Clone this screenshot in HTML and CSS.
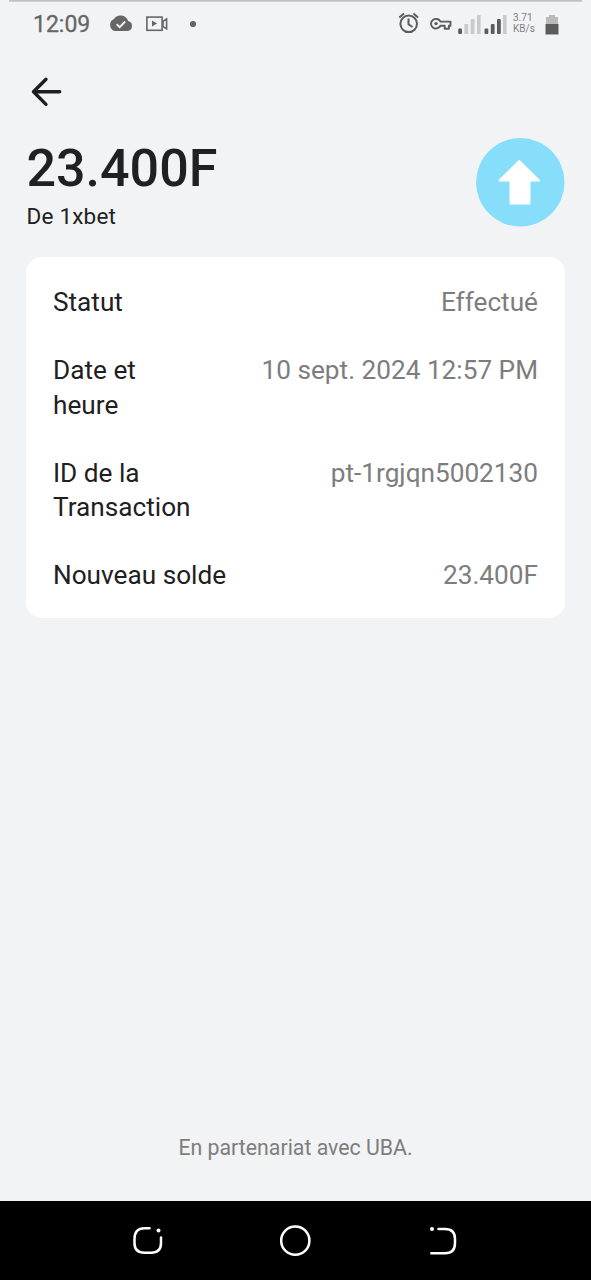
FILE: index.html
```html
<!DOCTYPE html>
<html lang="fr">
<head>
<meta charset="utf-8">
<title>Transaction</title>
<link rel="stylesheet" href="styles.css">
</head>
<body>
<div class="screen">
  <div class="top-line"></div>
  <header class="status">
    <span class="clock">12:09</span>
    <svg class="notif" width="90" height="24" viewBox="0 0 90 24">
      <path fill="#666" d="M6.100 19A6.200 6.200 0 0 1 4.700 7.300A8 8 0 0 1 19.100 9A5.100 5.100 0 0 1 18.700 19Z"/>
      <path fill="none" stroke="#f2f3f5" stroke-width="1.900" d="M7.700 12.200l3 2.900 5.500-5.600"/>
      <g fill="none" stroke="#666" stroke-width="1.600">
        <rect x="37.900" y="5.100" width="15.200" height="13.200"/>
        <path d="M54 9.200l3.600-2.200v9.800l-3.600-2.200z"/>
      </g>
      <path fill="#666" d="M43 8.600v6l5-3z"/>
      <circle cx="84" cy="12" r="3.100" fill="#666"/>
    </svg>
    <svg class="signals" width="112" height="30" viewBox="397 8 112 30">
      <g fill="none" stroke="#5c5c5c" stroke-width="2">
        <circle cx="408.700" cy="23.800" r="8.300"/>
        <path d="M408.500 18.500v5.800l4 2.700M399.300 17.400l4.700-3.900M413.400 13.500l4.700 3.900"/>
      </g>
      <path fill="none" stroke="#5c5c5c" stroke-width="1.900" stroke-linejoin="round" d="M440.500 21.600h10v4.200h-1.600v3h-4.200v-3h-4.200A5 4.800 0 1 1 440.500 21.600Z"/>
      <circle cx="436" cy="23.600" r="1.700" fill="#5c5c5c"/>
      <g fill="#c9cacb">
        <rect x="464.400" y="24" width="3.800" height="10"/>
        <rect x="470.700" y="19" width="3.800" height="15"/>
        <rect x="477" y="15" width="3.600" height="19"/>
        <rect x="503" y="15" width="3.600" height="19"/>
      </g>
      <g fill="#5c5c5c">
        <rect x="458.200" y="28.500" width="3.800" height="5.500" rx="1"/>
        <rect x="484.500" y="28.500" width="3.800" height="5.500" rx="1"/>
        <rect x="490.800" y="24" width="3.800" height="10" rx="1"/>
        <rect x="497" y="19" width="3.800" height="15" rx="1"/>
      </g>
    </svg>
    <span class="speed">3.71<br>KB/s</span>
    <svg class="battery" width="14" height="22" viewBox="0 0 14 22">
      <path fill="#b9babb" d="M4 1h6v2h3v8H1V3h3z"/>
      <path fill="#5c5c5c" d="M.5 10h13v10.500h-13z"/>
    </svg>
  </header>
  <svg class="back" width="34" height="32" viewBox="0 0 34 32" fill="none" stroke="#1d1e20" stroke-width="3.400" stroke-linecap="round" stroke-linejoin="round">
    <path d="M29.700 15.800H3.500M16 3.200L3.500 15.800 16 28.400"/>
  </svg>
  <section class="summary">
    <div class="heading">
      <h1 class="amount">23.400F</h1>
      <p class="source">De 1xbet</p>
    </div>
    <svg class="badge" width="89" height="89" viewBox="0 0 89 89">
      <circle cx="44.300" cy="44.300" r="44.200" fill="#87defb"/>
      <path fill="#fff" stroke="#fff" stroke-width="2" stroke-linejoin="round" d="M43.200 23L63 42.500H53.500V65.500H34.500V42.500H23.500Z"/>
    </svg>
  </section>
  <section class="card">
    <div class="row"><span class="label">Statut</span><span class="value">Effectué</span></div>
    <div class="row"><span class="label">Date et<br>heure</span><span class="value">10 sept. 2024 12:57 PM</span></div>
    <div class="row"><span class="label">ID de la<br>Transaction</span><span class="value">pt-1rgjqn5002130</span></div>
    <div class="row"><span class="label">Nouveau solde</span><span class="value">23.400F</span></div>
  </section>
  <p class="partner">En partenariat avec UBA.</p>
  <nav class="navbar">
    <svg width="32" height="32" viewBox="132 1225 32 32" fill="none" stroke="#fff" stroke-width="2.500" stroke-linecap="round">
      <path d="M149.500 1228.300H144.500Q134.500 1228.300 134.500 1239V1243Q134.500 1252.800 144.500 1252.800H151Q161 1252.800 161 1243V1237.500"/>
      <circle cx="158.500" cy="1230.500" r="2" fill="#fff" stroke="none"/>
    </svg>
    <svg width="34" height="34" viewBox="279 1224 34 34" fill="none" stroke="#fff" stroke-width="2.500">
      <circle cx="295.300" cy="1240.700" r="14.100"/>
    </svg>
    <svg width="32" height="32" viewBox="427 1225 32 32" fill="none" stroke="#fff" stroke-width="2.500" stroke-linecap="round">
      <path d="M438.500 1229H445Q455 1229 455 1239V1243Q455 1253.300 445 1253.300H431.300"/>
      <circle cx="432" cy="1229" r="2" fill="#fff" stroke="none"/>
    </svg>
  </nav>
</div>
</body>
</html>
```
FILE: styles.css
```css
* { box-sizing: border-box; }
body { margin: 0; background: #f2f3f5; font-family: Roboto, sans-serif; color: #1f2022; }
h1, p { margin: 0; }
svg { display: block; flex: none; }
.screen { width: 591px; height: 1280px; display: flex; flex-direction: column; overflow: hidden; }
.top-line { height: 2px; margin: 0 9px; background: linear-gradient(#b8b8b9, #d9d9da); flex: none; }
.status { height: 46px; display: flex; align-items: center; padding-left: 33px; flex: none; }
.clock { width: 76px; font-size: 23px; -webkit-text-stroke: .3px #666; line-height: 26px; color: #666; }
.notif { margin-top: -3px; }
.signals { margin-left: 198px; margin-top: -4px; }
.speed { width: 36px; padding-left: 4px; font-size: 10px; line-height: 11.500px; color: #808080; margin-top: -4px; white-space: nowrap; }
.back { margin: 28px 0 0 30px; }
.summary { display: flex; justify-content: space-between; padding: 30px 26px 0; height: 149px; flex: none; }
.heading { padding: 1px 0 0 .500px; }
.amount { font-size: 52px; font-weight: 500; line-height: 60px; }
.source { font-size: 22.500px; line-height: 26px; margin-top: 4px; letter-spacing: .2px; }
.card { margin: 0 26px; height: 361px; padding: 28px 27px 0; background: #fff; border-radius: 16px; display: flex; flex-direction: column; gap: 34px; flex: none; }
.row { display: flex; justify-content: space-between; font-size: 26.200px; line-height: 34.300px; white-space: nowrap; }
.value { color: #7d7d7d; }
.partner { margin-top: auto; margin-bottom: 40px; text-align: center; font-size: 21.300px; line-height: 26px; color: #7d7d7d; }
.navbar { height: 79px; flex: none; background: #000; display: flex; justify-content: space-between; align-items: center; padding: 0 132px; }
```
